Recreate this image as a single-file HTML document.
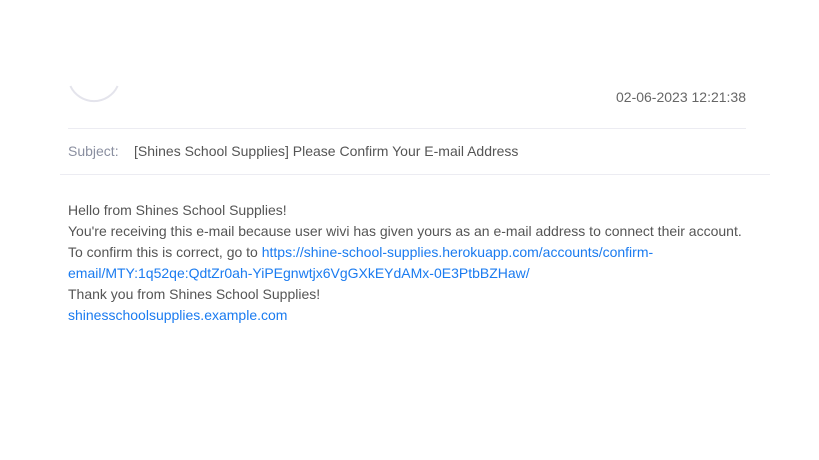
<!DOCTYPE html>
<html><head><style>
body{margin:0;width:819px;height:460px;background:#fff;font-family:"Liberation Sans",sans-serif;font-size:14px;color:#555;position:relative;overflow:hidden}
.a{position:absolute}
a{color:#1a7bf0;text-decoration:none}
</style></head><body>
<svg class="a" style="left:0;top:0" width="819" height="130">
<path d="M70.4 86 A26 26 0 0 0 117.6 86" fill="none" stroke="#e4e4ec" stroke-width="2"/>
</svg>
<div class="a" style="right:73px;top:89px;color:#666">02-06-2023 12:21:38</div>
<div class="a" style="left:68px;top:128px;width:678px;height:1px;background:#ececf2"></div>
<div class="a" style="left:68px;top:143px;color:#8a8fa0">Subject:</div>
<div class="a" style="left:134px;top:143px;color:#555">[Shines School Supplies] Please Confirm Your E-mail Address</div>
<div class="a" style="left:60px;top:174px;width:710px;height:1px;background:#ececf2"></div>
<div class="a" style="left:68px;top:200px;line-height:21px;width:700px">
Hello from Shines School Supplies!<br>
You're receiving this e-mail because user wivi has given yours as an e-mail address to connect their account.<br>
To confirm this is correct, go to <a>https://shine-school-supplies.herokuapp.com/accounts/confirm-</a><br><a>email/MTY:1q52qe:QdtZr0ah-YiPEgnwtjx6VgGXkEYdAMx-0E3PtbBZHaw/</a><br>
Thank you from Shines School Supplies!<br>
<a>shinesschoolsupplies.example.com</a>
</div>
</body></html>
